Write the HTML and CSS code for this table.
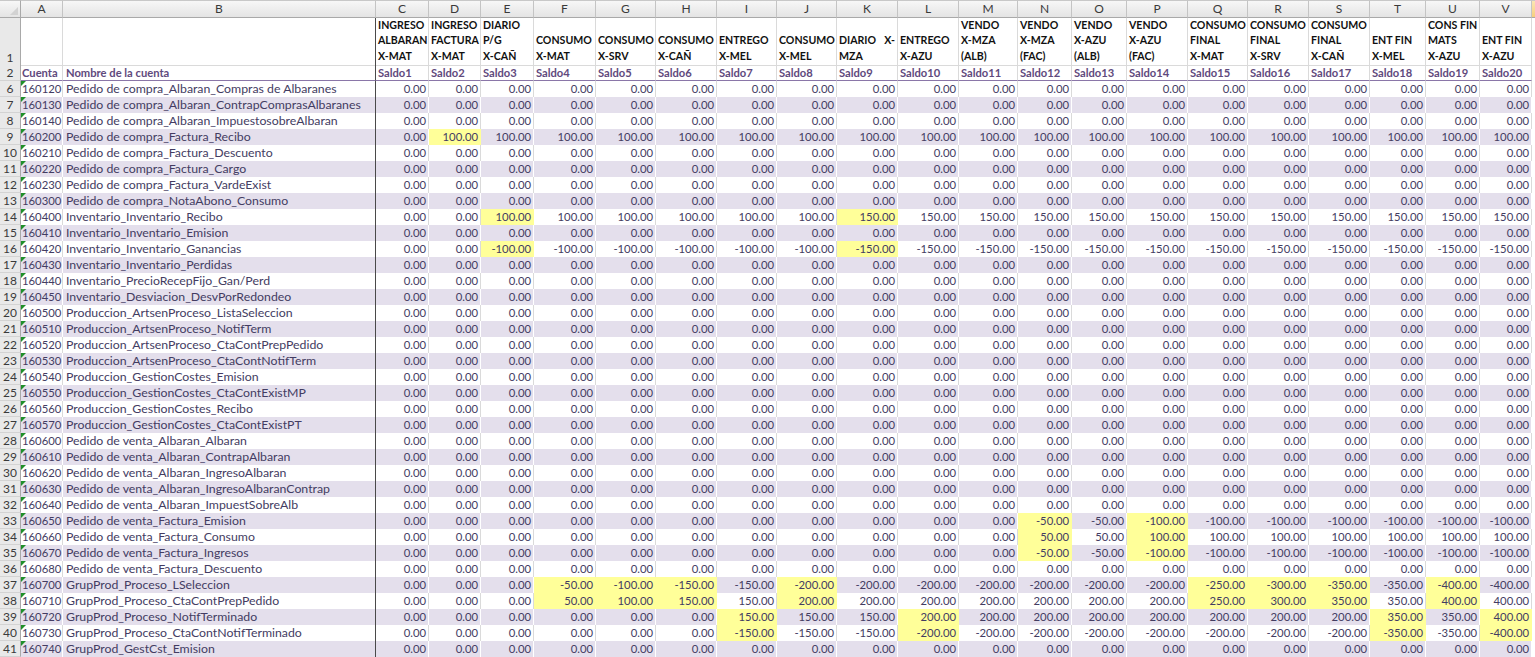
FILE: index.html
```html
<!DOCTYPE html>
<html lang="es">
<head>
<meta charset="utf-8">
<title>Saldos por cuenta</title>
<link rel="stylesheet" href="styles.css">
</head>
<body>
<div class="sheet">
  <div class="row colhdr"><span class="corner"></span><span>A</span><span>B</span><span>C</span><span>D</span><span>E</span><span>F</span><span>G</span><span>H</span><span>I</span><span>J</span><span>K</span><span>L</span><span>M</span><span>N</span><span>O</span><span>P</span><span>Q</span><span>R</span><span>S</span><span>T</span><span>U</span><span>V</span><span class="sel"></span></div>
  <div class="row r1"><span class="rh">1</span><span class="a0"></span><span class="b"></span><span class="h"><span>INGRESO</span><span>ALBARAN</span><span>X-MAT</span></span><span class="h"><span>INGRESO</span><span>FACTURA</span><span>X-MAT</span></span><span class="h"><span>DIARIO</span><span>P/G</span><span>X-CAÑ</span></span><span class="h"><span>CONSUMO</span><span>X-MAT</span></span><span class="h"><span>CONSUMO</span><span>X-SRV</span></span><span class="h"><span>CONSUMO</span><span>X-CAÑ</span></span><span class="h"><span>ENTREGO</span><span>X-MEL</span></span><span class="h"><span>CONSUMO</span><span>X-MEL</span></span><span class="h"><span class="j"><span>DIARIO</span><span>X-</span></span><span>MZA</span></span><span class="h"><span>ENTREGO</span><span>X-AZU</span></span><span class="h"><span>VENDO</span><span>X-MZA</span><span>(ALB)</span></span><span class="h"><span>VENDO</span><span>X-MZA</span><span>(FAC)</span></span><span class="h"><span>VENDO</span><span>X-AZU</span><span>(ALB)</span></span><span class="h"><span>VENDO</span><span>X-AZU</span><span>(FAC)</span></span><span class="h"><span>CONSUMO</span><span>FINAL</span><span>X-MAT</span></span><span class="h"><span>CONSUMO</span><span>FINAL</span><span>X-SRV</span></span><span class="h"><span>CONSUMO</span><span>FINAL</span><span>X-CAÑ</span></span><span class="h"><span>ENT FIN</span><span>X-MEL</span></span><span class="h"><span>CONS FIN</span><span>MATS</span><span>X-AZU</span></span><span class="h"><span>ENT FIN</span><span>X-AZU</span></span></div>
  <div class="row r2"><span class="rh">2</span><span class="a0">Cuenta</span><span class="b">Nombre de la cuenta</span><span>Saldo1</span><span>Saldo2</span><span>Saldo3</span><span>Saldo4</span><span>Saldo5</span><span>Saldo6</span><span>Saldo7</span><span>Saldo8</span><span>Saldo9</span><span>Saldo10</span><span>Saldo11</span><span>Saldo12</span><span>Saldo13</span><span>Saldo14</span><span>Saldo15</span><span>Saldo16</span><span>Saldo17</span><span>Saldo18</span><span>Saldo19</span><span>Saldo20</span></div>

  <div class="row"><span class="rh">6</span><span class="a">160120</span><span class="b">Pedido de compra_Albaran_Compras de Albaranes</span><span>0.00</span><span>0.00</span><span>0.00</span><span>0.00</span><span>0.00</span><span>0.00</span><span>0.00</span><span>0.00</span><span>0.00</span><span>0.00</span><span>0.00</span><span>0.00</span><span>0.00</span><span>0.00</span><span>0.00</span><span>0.00</span><span>0.00</span><span>0.00</span><span>0.00</span><span>0.00</span></div>
  <div class="row alt"><span class="rh">7</span><span class="a">160130</span><span class="b">Pedido de compra_Albaran_ContrapComprasAlbaranes</span><span>0.00</span><span>0.00</span><span>0.00</span><span>0.00</span><span>0.00</span><span>0.00</span><span>0.00</span><span>0.00</span><span>0.00</span><span>0.00</span><span>0.00</span><span>0.00</span><span>0.00</span><span>0.00</span><span>0.00</span><span>0.00</span><span>0.00</span><span>0.00</span><span>0.00</span><span>0.00</span></div>
  <div class="row"><span class="rh">8</span><span class="a">160140</span><span class="b">Pedido de compra_Albaran_ImpuestosobreAlbaran</span><span>0.00</span><span>0.00</span><span>0.00</span><span>0.00</span><span>0.00</span><span>0.00</span><span>0.00</span><span>0.00</span><span>0.00</span><span>0.00</span><span>0.00</span><span>0.00</span><span>0.00</span><span>0.00</span><span>0.00</span><span>0.00</span><span>0.00</span><span>0.00</span><span>0.00</span><span>0.00</span></div>
  <div class="row alt"><span class="rh">9</span><span class="a">160200</span><span class="b">Pedido de compra_Factura_Recibo</span><span>0.00</span><span class="y">100.00</span><span>100.00</span><span>100.00</span><span>100.00</span><span>100.00</span><span>100.00</span><span>100.00</span><span>100.00</span><span>100.00</span><span>100.00</span><span>100.00</span><span>100.00</span><span>100.00</span><span>100.00</span><span>100.00</span><span>100.00</span><span>100.00</span><span>100.00</span><span>100.00</span></div>
  <div class="row"><span class="rh">10</span><span class="a">160210</span><span class="b">Pedido de compra_Factura_Descuento</span><span>0.00</span><span>0.00</span><span>0.00</span><span>0.00</span><span>0.00</span><span>0.00</span><span>0.00</span><span>0.00</span><span>0.00</span><span>0.00</span><span>0.00</span><span>0.00</span><span>0.00</span><span>0.00</span><span>0.00</span><span>0.00</span><span>0.00</span><span>0.00</span><span>0.00</span><span>0.00</span></div>
  <div class="row alt"><span class="rh">11</span><span class="a">160220</span><span class="b">Pedido de compra_Factura_Cargo</span><span>0.00</span><span>0.00</span><span>0.00</span><span>0.00</span><span>0.00</span><span>0.00</span><span>0.00</span><span>0.00</span><span>0.00</span><span>0.00</span><span>0.00</span><span>0.00</span><span>0.00</span><span>0.00</span><span>0.00</span><span>0.00</span><span>0.00</span><span>0.00</span><span>0.00</span><span>0.00</span></div>
  <div class="row"><span class="rh">12</span><span class="a">160230</span><span class="b">Pedido de compra_Factura_VardeExist</span><span>0.00</span><span>0.00</span><span>0.00</span><span>0.00</span><span>0.00</span><span>0.00</span><span>0.00</span><span>0.00</span><span>0.00</span><span>0.00</span><span>0.00</span><span>0.00</span><span>0.00</span><span>0.00</span><span>0.00</span><span>0.00</span><span>0.00</span><span>0.00</span><span>0.00</span><span>0.00</span></div>
  <div class="row alt"><span class="rh">13</span><span class="a">160300</span><span class="b">Pedido de compra_NotaAbono_Consumo</span><span>0.00</span><span>0.00</span><span>0.00</span><span>0.00</span><span>0.00</span><span>0.00</span><span>0.00</span><span>0.00</span><span>0.00</span><span>0.00</span><span>0.00</span><span>0.00</span><span>0.00</span><span>0.00</span><span>0.00</span><span>0.00</span><span>0.00</span><span>0.00</span><span>0.00</span><span>0.00</span></div>
  <div class="row"><span class="rh">14</span><span class="a">160400</span><span class="b">Inventario_Inventario_Recibo</span><span>0.00</span><span>0.00</span><span class="y">100.00</span><span>100.00</span><span>100.00</span><span>100.00</span><span>100.00</span><span>100.00</span><span class="y">150.00</span><span>150.00</span><span>150.00</span><span>150.00</span><span>150.00</span><span>150.00</span><span>150.00</span><span>150.00</span><span>150.00</span><span>150.00</span><span>150.00</span><span>150.00</span></div>
  <div class="row alt"><span class="rh">15</span><span class="a">160410</span><span class="b">Inventario_Inventario_Emision</span><span>0.00</span><span>0.00</span><span>0.00</span><span>0.00</span><span>0.00</span><span>0.00</span><span>0.00</span><span>0.00</span><span>0.00</span><span>0.00</span><span>0.00</span><span>0.00</span><span>0.00</span><span>0.00</span><span>0.00</span><span>0.00</span><span>0.00</span><span>0.00</span><span>0.00</span><span>0.00</span></div>
  <div class="row"><span class="rh">16</span><span class="a">160420</span><span class="b">Inventario_Inventario_Ganancias</span><span>0.00</span><span>0.00</span><span class="y">-100.00</span><span>-100.00</span><span>-100.00</span><span>-100.00</span><span>-100.00</span><span>-100.00</span><span class="y">-150.00</span><span>-150.00</span><span>-150.00</span><span>-150.00</span><span>-150.00</span><span>-150.00</span><span>-150.00</span><span>-150.00</span><span>-150.00</span><span>-150.00</span><span>-150.00</span><span>-150.00</span></div>
  <div class="row alt"><span class="rh">17</span><span class="a">160430</span><span class="b">Inventario_Inventario_Perdidas</span><span>0.00</span><span>0.00</span><span>0.00</span><span>0.00</span><span>0.00</span><span>0.00</span><span>0.00</span><span>0.00</span><span>0.00</span><span>0.00</span><span>0.00</span><span>0.00</span><span>0.00</span><span>0.00</span><span>0.00</span><span>0.00</span><span>0.00</span><span>0.00</span><span>0.00</span><span>0.00</span></div>
  <div class="row"><span class="rh">18</span><span class="a">160440</span><span class="b">Inventario_PrecioRecepFijo_Gan/Perd</span><span>0.00</span><span>0.00</span><span>0.00</span><span>0.00</span><span>0.00</span><span>0.00</span><span>0.00</span><span>0.00</span><span>0.00</span><span>0.00</span><span>0.00</span><span>0.00</span><span>0.00</span><span>0.00</span><span>0.00</span><span>0.00</span><span>0.00</span><span>0.00</span><span>0.00</span><span>0.00</span></div>
  <div class="row alt"><span class="rh">19</span><span class="a">160450</span><span class="b">Inventario_Desviacion_DesvPorRedondeo</span><span>0.00</span><span>0.00</span><span>0.00</span><span>0.00</span><span>0.00</span><span>0.00</span><span>0.00</span><span>0.00</span><span>0.00</span><span>0.00</span><span>0.00</span><span>0.00</span><span>0.00</span><span>0.00</span><span>0.00</span><span>0.00</span><span>0.00</span><span>0.00</span><span>0.00</span><span>0.00</span></div>
  <div class="row"><span class="rh">20</span><span class="a">160500</span><span class="b">Produccion_ArtsenProceso_ListaSeleccion</span><span>0.00</span><span>0.00</span><span>0.00</span><span>0.00</span><span>0.00</span><span>0.00</span><span>0.00</span><span>0.00</span><span>0.00</span><span>0.00</span><span>0.00</span><span>0.00</span><span>0.00</span><span>0.00</span><span>0.00</span><span>0.00</span><span>0.00</span><span>0.00</span><span>0.00</span><span>0.00</span></div>
  <div class="row alt"><span class="rh">21</span><span class="a">160510</span><span class="b">Produccion_ArtsenProceso_NotifTerm</span><span>0.00</span><span>0.00</span><span>0.00</span><span>0.00</span><span>0.00</span><span>0.00</span><span>0.00</span><span>0.00</span><span>0.00</span><span>0.00</span><span>0.00</span><span>0.00</span><span>0.00</span><span>0.00</span><span>0.00</span><span>0.00</span><span>0.00</span><span>0.00</span><span>0.00</span><span>0.00</span></div>
  <div class="row"><span class="rh">22</span><span class="a">160520</span><span class="b">Produccion_ArtsenProceso_CtaContPrepPedido</span><span>0.00</span><span>0.00</span><span>0.00</span><span>0.00</span><span>0.00</span><span>0.00</span><span>0.00</span><span>0.00</span><span>0.00</span><span>0.00</span><span>0.00</span><span>0.00</span><span>0.00</span><span>0.00</span><span>0.00</span><span>0.00</span><span>0.00</span><span>0.00</span><span>0.00</span><span>0.00</span></div>
  <div class="row alt"><span class="rh">23</span><span class="a">160530</span><span class="b">Produccion_ArtsenProceso_CtaContNotifTerm</span><span>0.00</span><span>0.00</span><span>0.00</span><span>0.00</span><span>0.00</span><span>0.00</span><span>0.00</span><span>0.00</span><span>0.00</span><span>0.00</span><span>0.00</span><span>0.00</span><span>0.00</span><span>0.00</span><span>0.00</span><span>0.00</span><span>0.00</span><span>0.00</span><span>0.00</span><span>0.00</span></div>
  <div class="row"><span class="rh">24</span><span class="a">160540</span><span class="b">Produccion_GestionCostes_Emision</span><span>0.00</span><span>0.00</span><span>0.00</span><span>0.00</span><span>0.00</span><span>0.00</span><span>0.00</span><span>0.00</span><span>0.00</span><span>0.00</span><span>0.00</span><span>0.00</span><span>0.00</span><span>0.00</span><span>0.00</span><span>0.00</span><span>0.00</span><span>0.00</span><span>0.00</span><span>0.00</span></div>
  <div class="row alt"><span class="rh">25</span><span class="a">160550</span><span class="b">Produccion_GestionCostes_CtaContExistMP</span><span>0.00</span><span>0.00</span><span>0.00</span><span>0.00</span><span>0.00</span><span>0.00</span><span>0.00</span><span>0.00</span><span>0.00</span><span>0.00</span><span>0.00</span><span>0.00</span><span>0.00</span><span>0.00</span><span>0.00</span><span>0.00</span><span>0.00</span><span>0.00</span><span>0.00</span><span>0.00</span></div>
  <div class="row"><span class="rh">26</span><span class="a">160560</span><span class="b">Produccion_GestionCostes_Recibo</span><span>0.00</span><span>0.00</span><span>0.00</span><span>0.00</span><span>0.00</span><span>0.00</span><span>0.00</span><span>0.00</span><span>0.00</span><span>0.00</span><span>0.00</span><span>0.00</span><span>0.00</span><span>0.00</span><span>0.00</span><span>0.00</span><span>0.00</span><span>0.00</span><span>0.00</span><span>0.00</span></div>
  <div class="row alt"><span class="rh">27</span><span class="a">160570</span><span class="b">Produccion_GestionCostes_CtaContExistPT</span><span>0.00</span><span>0.00</span><span>0.00</span><span>0.00</span><span>0.00</span><span>0.00</span><span>0.00</span><span>0.00</span><span>0.00</span><span>0.00</span><span>0.00</span><span>0.00</span><span>0.00</span><span>0.00</span><span>0.00</span><span>0.00</span><span>0.00</span><span>0.00</span><span>0.00</span><span>0.00</span></div>
  <div class="row"><span class="rh">28</span><span class="a">160600</span><span class="b">Pedido de venta_Albaran_Albaran</span><span>0.00</span><span>0.00</span><span>0.00</span><span>0.00</span><span>0.00</span><span>0.00</span><span>0.00</span><span>0.00</span><span>0.00</span><span>0.00</span><span>0.00</span><span>0.00</span><span>0.00</span><span>0.00</span><span>0.00</span><span>0.00</span><span>0.00</span><span>0.00</span><span>0.00</span><span>0.00</span></div>
  <div class="row alt"><span class="rh">29</span><span class="a">160610</span><span class="b">Pedido de venta_Albaran_ContrapAlbaran</span><span>0.00</span><span>0.00</span><span>0.00</span><span>0.00</span><span>0.00</span><span>0.00</span><span>0.00</span><span>0.00</span><span>0.00</span><span>0.00</span><span>0.00</span><span>0.00</span><span>0.00</span><span>0.00</span><span>0.00</span><span>0.00</span><span>0.00</span><span>0.00</span><span>0.00</span><span>0.00</span></div>
  <div class="row"><span class="rh">30</span><span class="a">160620</span><span class="b">Pedido de venta_Albaran_IngresoAlbaran</span><span>0.00</span><span>0.00</span><span>0.00</span><span>0.00</span><span>0.00</span><span>0.00</span><span>0.00</span><span>0.00</span><span>0.00</span><span>0.00</span><span>0.00</span><span>0.00</span><span>0.00</span><span>0.00</span><span>0.00</span><span>0.00</span><span>0.00</span><span>0.00</span><span>0.00</span><span>0.00</span></div>
  <div class="row alt"><span class="rh">31</span><span class="a">160630</span><span class="b">Pedido de venta_Albaran_IngresoAlbaranContrap</span><span>0.00</span><span>0.00</span><span>0.00</span><span>0.00</span><span>0.00</span><span>0.00</span><span>0.00</span><span>0.00</span><span>0.00</span><span>0.00</span><span>0.00</span><span>0.00</span><span>0.00</span><span>0.00</span><span>0.00</span><span>0.00</span><span>0.00</span><span>0.00</span><span>0.00</span><span>0.00</span></div>
  <div class="row"><span class="rh">32</span><span class="a">160640</span><span class="b">Pedido de venta_Albaran_ImpuestSobreAlb</span><span>0.00</span><span>0.00</span><span>0.00</span><span>0.00</span><span>0.00</span><span>0.00</span><span>0.00</span><span>0.00</span><span>0.00</span><span>0.00</span><span>0.00</span><span>0.00</span><span>0.00</span><span>0.00</span><span>0.00</span><span>0.00</span><span>0.00</span><span>0.00</span><span>0.00</span><span>0.00</span></div>
  <div class="row alt"><span class="rh">33</span><span class="a">160650</span><span class="b">Pedido de venta_Factura_Emision</span><span>0.00</span><span>0.00</span><span>0.00</span><span>0.00</span><span>0.00</span><span>0.00</span><span>0.00</span><span>0.00</span><span>0.00</span><span>0.00</span><span>0.00</span><span class="y">-50.00</span><span>-50.00</span><span class="y">-100.00</span><span>-100.00</span><span>-100.00</span><span>-100.00</span><span>-100.00</span><span>-100.00</span><span>-100.00</span></div>
  <div class="row"><span class="rh">34</span><span class="a">160660</span><span class="b">Pedido de venta_Factura_Consumo</span><span>0.00</span><span>0.00</span><span>0.00</span><span>0.00</span><span>0.00</span><span>0.00</span><span>0.00</span><span>0.00</span><span>0.00</span><span>0.00</span><span>0.00</span><span class="y">50.00</span><span>50.00</span><span class="y">100.00</span><span>100.00</span><span>100.00</span><span>100.00</span><span>100.00</span><span>100.00</span><span>100.00</span></div>
  <div class="row alt"><span class="rh">35</span><span class="a">160670</span><span class="b">Pedido de venta_Factura_Ingresos</span><span>0.00</span><span>0.00</span><span>0.00</span><span>0.00</span><span>0.00</span><span>0.00</span><span>0.00</span><span>0.00</span><span>0.00</span><span>0.00</span><span>0.00</span><span class="y">-50.00</span><span>-50.00</span><span class="y">-100.00</span><span>-100.00</span><span>-100.00</span><span>-100.00</span><span>-100.00</span><span>-100.00</span><span>-100.00</span></div>
  <div class="row"><span class="rh">36</span><span class="a">160680</span><span class="b">Pedido de venta_Factura_Descuento</span><span>0.00</span><span>0.00</span><span>0.00</span><span>0.00</span><span>0.00</span><span>0.00</span><span>0.00</span><span>0.00</span><span>0.00</span><span>0.00</span><span>0.00</span><span>0.00</span><span>0.00</span><span>0.00</span><span>0.00</span><span>0.00</span><span>0.00</span><span>0.00</span><span>0.00</span><span>0.00</span></div>
  <div class="row alt"><span class="rh">37</span><span class="a">160700</span><span class="b">GrupProd_Proceso_LSeleccion</span><span>0.00</span><span>0.00</span><span>0.00</span><span class="y">-50.00</span><span class="y">-100.00</span><span class="y">-150.00</span><span>-150.00</span><span class="y">-200.00</span><span>-200.00</span><span>-200.00</span><span>-200.00</span><span>-200.00</span><span>-200.00</span><span>-200.00</span><span class="y">-250.00</span><span class="y">-300.00</span><span class="y">-350.00</span><span>-350.00</span><span class="y">-400.00</span><span>-400.00</span></div>
  <div class="row"><span class="rh">38</span><span class="a">160710</span><span class="b">GrupProd_Proceso_CtaContPrepPedido</span><span>0.00</span><span>0.00</span><span>0.00</span><span class="y">50.00</span><span class="y">100.00</span><span class="y">150.00</span><span>150.00</span><span class="y">200.00</span><span>200.00</span><span>200.00</span><span>200.00</span><span>200.00</span><span>200.00</span><span>200.00</span><span class="y">250.00</span><span class="y">300.00</span><span class="y">350.00</span><span>350.00</span><span class="y">400.00</span><span>400.00</span></div>
  <div class="row alt"><span class="rh">39</span><span class="a">160720</span><span class="b">GrupProd_Proceso_NotifTerminado</span><span>0.00</span><span>0.00</span><span>0.00</span><span>0.00</span><span>0.00</span><span>0.00</span><span class="y">150.00</span><span>150.00</span><span>150.00</span><span class="y">200.00</span><span>200.00</span><span>200.00</span><span>200.00</span><span>200.00</span><span>200.00</span><span>200.00</span><span>200.00</span><span class="y">350.00</span><span>350.00</span><span class="y">400.00</span></div>
  <div class="row"><span class="rh">40</span><span class="a">160730</span><span class="b">GrupProd_Proceso_CtaContNotifTerminado</span><span>0.00</span><span>0.00</span><span>0.00</span><span>0.00</span><span>0.00</span><span>0.00</span><span class="y">-150.00</span><span>-150.00</span><span>-150.00</span><span class="y">-200.00</span><span>-200.00</span><span>-200.00</span><span>-200.00</span><span>-200.00</span><span>-200.00</span><span>-200.00</span><span>-200.00</span><span class="y">-350.00</span><span>-350.00</span><span class="y">-400.00</span></div>
  <div class="row alt"><span class="rh">41</span><span class="a">160740</span><span class="b">GrupProd_GestCst_Emision</span><span>0.00</span><span>0.00</span><span>0.00</span><span>0.00</span><span>0.00</span><span>0.00</span><span>0.00</span><span>0.00</span><span>0.00</span><span>0.00</span><span>0.00</span><span>0.00</span><span>0.00</span><span>0.00</span><span>0.00</span><span>0.00</span><span>0.00</span><span>0.00</span><span>0.00</span><span>0.00</span></div>
</div>
</body>
</html>
```

FILE: styles.css
```css
html, body {
  margin: 0;
  padding: 0;
  background: #ffffff;
}

.sheet {
  font-family: "Lato", "Liberation Sans", sans-serif;
  font-size: 11.3px;
  color: #433c62;
  width: 1535px;
  height: 657px;
  overflow: hidden;
}

.row {
  display: grid;
  grid-template-columns: 21px 42px 313px 53px 52px 53px 62px 60px 61px 60px 60px 61px 61px 59px 54px 55px 61px 60px 61px 61px 56px 54px 52px 1fr;
  height: 16px;
}

.row > span {
  display: block;
  box-sizing: border-box;
  height: 100%;
  line-height: 16px;
  padding: 0 2px 0 2px;
  border-right: 1px solid #dadada;
  white-space: nowrap;
  overflow: hidden;
  text-align: right;
}

/* column letters */
.colhdr {
  height: 18px;
}
.colhdr > span {
  background: linear-gradient(#f7f7f7, #e4e4e4);
  border-right: 1px solid #c4c4c4;
  border-top: 1px solid #c8c8c8;
  border-bottom: 1px solid #a9a9a9;
  text-align: center;
  line-height: 15px;
  color: #3a3a3a;
  font-size: 12px;
}
.colhdr > .corner {
  position: relative;
  border-right-color: #a9a9a9;
}
.colhdr > .corner::after {
  content: "";
  position: absolute;
  right: 2px;
  bottom: 2px;
  border-left: 8px solid transparent;
  border-bottom: 8px solid #d2d2d2;
}
.colhdr > .sel {
  background: linear-gradient(#fbe7b4, #f6cf7e);
  border-right: none;
  padding: 0;
}

/* row numbers */
.row > .rh {
  background: #e9e9e9;
  border-right: 1px solid #a9a9a9;
  border-bottom: 1px solid #d3d3d3;
  text-align: center;
  color: #3a3a3a;
  font-size: 12px;
  padding: 0;
  line-height: 15px;
}

/* header row 1 (titles) */
.r1 {
  height: 47px;
}
.r1 > span {
  border-bottom: 1px solid #dadada;
}
.r1 > .rh {
  display: flex;
  align-items: flex-end;
  justify-content: center;
  line-height: 15px;
}
.r1 > .h {
  display: flex;
  flex-direction: column;
  justify-content: flex-end;
  text-align: left;
  font-weight: 700;
  font-size: 10.6px;
  color: #111111;
  line-height: 15.4px;
  padding-bottom: 1px;
  overflow: visible;
}
.h > span {
  display: block;
}
.h > .j {
  display: flex;
  justify-content: space-between;
}

/* header row 2 (field names) */
.r2 > span {
  text-align: left;
  font-weight: 700;
  font-size: 11.2px;
  color: #5f4a7d;
  border-bottom: 1px solid #8a76a8;
}
.r2 > .rh {
  font-weight: 400;
  font-size: 12px;
  border-bottom: 1px solid #d3d3d3;
}

/* account columns */
.row > .a,
.row > .a0 {
  text-align: left;
  padding-left: 1px;
  padding-right: 0;
}
.row > .a {
  position: relative;
  font-size: 11.3px;
}
.row > .a::before {
  content: "";
  position: absolute;
  left: 0;
  top: 0;
  border-top: 5px solid #1f8f2a;
  border-right: 5px solid transparent;
}
.row > .b {
  text-align: left;
  padding-left: 3px;
  font-size: 12.3px;
  border-right: 1px solid #4a4a4a;
}
.r2 > .b {
  font-size: 11.2px;
}

/* banded rows */
.alt > span {
  background: #e4dfec;
  border-right-color: #ffffff;
}
.alt > .b {
  border-right-color: #4a4a4a;
}
.alt > .rh {
  background: #e9e9e9;
  border-right-color: #a9a9a9;
}

/* highlighted values */
.row > .y {
  background: #ffff99;
  border-right-color: #ffff99;
}
```
